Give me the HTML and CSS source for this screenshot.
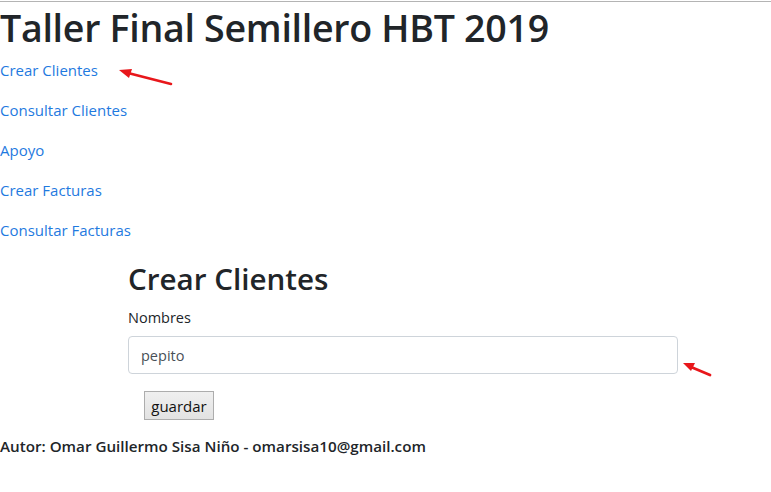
FILE: index.html
```html
<!DOCTYPE html>
<html lang="es">
<head>
<meta charset="utf-8">
<title>Taller Final Semillero HBT 2019</title>
<link rel="stylesheet" href="styles.css">
</head>
<body>
<div class="topline"></div>
<h1 class="title">Taller Final Semillero HBT 2019</h1>
<nav class="menu">
  <p><a href="#">Crear Clientes</a></p>
  <p><a href="#">Consultar Clientes</a></p>
  <p><a href="#">Apoyo</a></p>
  <p><a href="#">Crear Facturas</a></p>
  <p><a href="#">Consultar Facturas</a></p>
</nav>
<main class="form-area">
  <h2 class="form-title">Crear Clientes</h2>
  <label class="label" for="nombres">Nombres</label>
  <input class="form-control" id="nombres" type="text" value="pepito">
  <div class="actions"><button class="btn" type="button">guardar</button></div>
</main>
<footer class="footer">Autor: Omar Guillermo Sisa Niño - omarsisa10@gmail.com</footer>

<svg class="arrow arrow-1" width="60" height="22" viewBox="0 0 60 22">
  <line x1="10" y1="4" x2="53" y2="15" stroke="#e8171b" stroke-width="2.6" stroke-linecap="round"/>
  <polygon points="1,1 14,0 11,9" fill="#e8171b"/>
</svg>
<svg class="arrow arrow-2" width="32" height="18" viewBox="0 0 32 18">
  <line x1="8" y1="5" x2="27" y2="13" stroke="#e8171b" stroke-width="2.8" stroke-linecap="round"/>
  <polygon points="0,1 12,1 8,9" fill="#e8171b"/>
</svg>
</body>
</html>
```

FILE: styles.css
```css
html, body {
  margin: 0;
  padding: 0;
  background: #fff;
}
body {
  position: relative;
  font-family: "Open Sans", "Noto Sans", sans-serif;
  color: #212529;
  font-size: 16px;
  line-height: 24px;
  width: 771px;
  height: 492px;
  overflow: hidden;
}
.topline {
  height: 1px;
  margin-top: 1px;
  background: #b4b4b4;
}
.title {
  margin: 0;
  font-size: 37.6px;
  font-weight: 600;
  line-height: 48px;
  letter-spacing: -0.3px;
  padding-top: 2px;
}
.menu {
  margin-top: 6px;
}
.menu p {
  margin: 0 0 16px 0;
  font-size: 15px;
  line-height: 24px;
}
.menu a {
  color: #1f7ae0;
  text-decoration: none;
}
.form-area {
  margin-left: 128px;
  width: 550px;
  margin-top: 18px;
}
.form-title {
  margin: 0 0 8px 0;
  font-size: 29.6px;
  font-weight: 600;
  line-height: 38px;
}
.label {
  display: block;
  font-size: 14.5px;
  line-height: 24px;
  margin-bottom: 6px;
}
.form-control {
  display: block;
  box-sizing: border-box;
  width: 550px;
  height: 38px;
  padding: 6px 12px;
  font-family: inherit;
  font-size: 14.5px;
  color: #495057;
  border: 1px solid #ced4da;
  border-radius: 4px;
  background: #fff;
  margin: 0;
}
.actions {
  padding: 17px 0 0 16px;
}
.btn {
  box-sizing: border-box;
  width: 70px;
  height: 29px;
  padding: 0;
  font-family: inherit;
  font-size: 15px;
  color: #111;
  border: 1px solid #adadad;
  background: linear-gradient(#f0f0f0, #e2e2e2);
  border-radius: 0;
}
.footer {
  margin-top: 14px;
  font-size: 15.2px;
  font-weight: 600;
  line-height: 24px;
}
.arrow {
  position: absolute;
}
.arrow-1 {
  left: 118px;
  top: 69px;
}
.arrow-2 {
  left: 683px;
  top: 362px;
}
```
